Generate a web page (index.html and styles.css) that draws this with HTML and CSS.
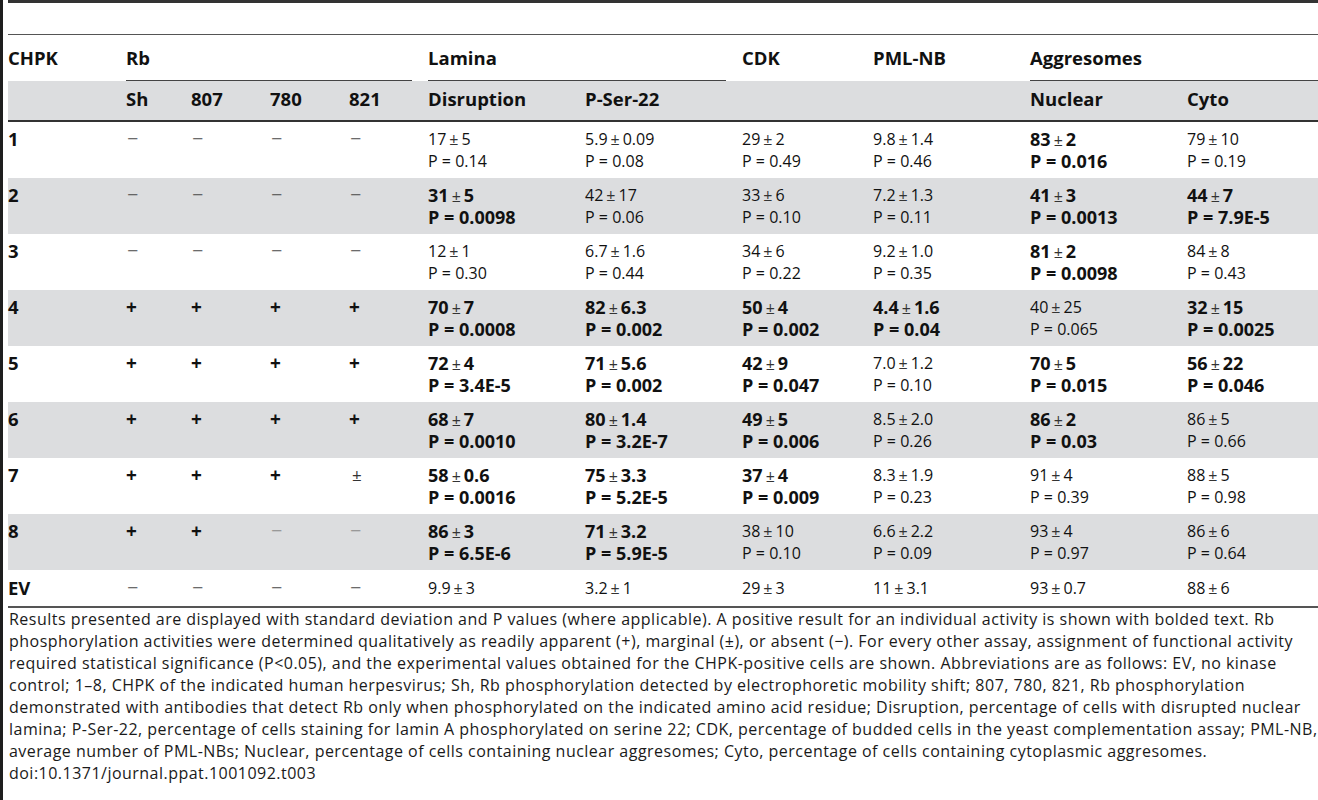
FILE: index.html
```html
<!DOCTYPE html>
<html>
<head>
  <title>Table 3. CHPK activities</title>
  <link rel="stylesheet" href="styles.css">
</head>
<body>
  <div class="frame">
    <div class="caption-space"></div>

    <table class="results">
      <colgroup>
        <col class="c-chpk">
        <col class="c-sh">
        <col class="c-rb">
        <col class="c-rb">
        <col class="c-rb">
        <col class="c-wide">
        <col class="c-wide">
        <col class="c-cdk">
        <col class="c-wide">
        <col class="c-wide">
        <col class="c-cyto">
      </colgroup>
      <thead>
        <tr class="group-row">
          <th>CHPK</th>
          <th colspan="4" class="group"><div class="group-line">Rb</div></th>
          <th colspan="2" class="group"><div class="group-line">Lamina</div></th>
          <th>CDK</th>
          <th>PML-NB</th>
          <th colspan="2" class="group last"><div class="group-line">Aggresomes</div></th>
        </tr>
        <tr class="sub-row">
          <th></th>
          <th>Sh</th>
          <th>807</th>
          <th>780</th>
          <th>821</th>
          <th>Disruption</th>
          <th>P-Ser-22</th>
          <th></th>
          <th></th>
          <th>Nuclear</th>
          <th>Cyto</th>
        </tr>
      </thead>
      <tbody>
        <tr>
          <td class="label">1</td>
          <td class="neg">−</td><td class="neg">−</td><td class="neg">−</td><td class="neg">−</td>
          <td>17<span class="pm">±</span>5<br>P = 0.14</td>
          <td>5.9<span class="pm">±</span>0.09<br>P = 0.08</td>
          <td>29<span class="pm">±</span>2<br>P = 0.49</td>
          <td>9.8<span class="pm">±</span>1.4<br>P = 0.46</td>
          <td class="sig">83<span class="pm">±</span>2<br>P = 0.016</td>
          <td>79<span class="pm">±</span>10<br>P = 0.19</td>
        </tr>
        <tr>
          <td class="label">2</td>
          <td class="neg">−</td><td class="neg">−</td><td class="neg">−</td><td class="neg">−</td>
          <td class="sig">31<span class="pm">±</span>5<br>P = 0.0098</td>
          <td>42<span class="pm">±</span>17<br>P = 0.06</td>
          <td>33<span class="pm">±</span>6<br>P = 0.10</td>
          <td>7.2<span class="pm">±</span>1.3<br>P = 0.11</td>
          <td class="sig">41<span class="pm">±</span>3<br>P = 0.0013</td>
          <td class="sig">44<span class="pm">±</span>7<br>P = 7.9E-5</td>
        </tr>
        <tr>
          <td class="label">3</td>
          <td class="neg">−</td><td class="neg">−</td><td class="neg">−</td><td class="neg">−</td>
          <td>12<span class="pm">±</span>1<br>P = 0.30</td>
          <td>6.7<span class="pm">±</span>1.6<br>P = 0.44</td>
          <td>34<span class="pm">±</span>6<br>P = 0.22</td>
          <td>9.2<span class="pm">±</span>1.0<br>P = 0.35</td>
          <td class="sig">81<span class="pm">±</span>2<br>P = 0.0098</td>
          <td>84<span class="pm">±</span>8<br>P = 0.43</td>
        </tr>
        <tr>
          <td class="label">4</td>
          <td class="pos">+</td><td class="pos">+</td><td class="pos">+</td><td class="pos">+</td>
          <td class="sig">70<span class="pm">±</span>7<br>P = 0.0008</td>
          <td class="sig">82<span class="pm">±</span>6.3<br>P = 0.002</td>
          <td class="sig">50<span class="pm">±</span>4<br>P = 0.002</td>
          <td class="sig">4.4<span class="pm">±</span>1.6<br>P = 0.04</td>
          <td>40<span class="pm">±</span>25<br>P = 0.065</td>
          <td class="sig">32<span class="pm">±</span>15<br>P = 0.0025</td>
        </tr>
        <tr>
          <td class="label">5</td>
          <td class="pos">+</td><td class="pos">+</td><td class="pos">+</td><td class="pos">+</td>
          <td class="sig">72<span class="pm">±</span>4<br>P = 3.4E-5</td>
          <td class="sig">71<span class="pm">±</span>5.6<br>P = 0.002</td>
          <td class="sig">42<span class="pm">±</span>9<br>P = 0.047</td>
          <td>7.0<span class="pm">±</span>1.2<br>P = 0.10</td>
          <td class="sig">70<span class="pm">±</span>5<br>P = 0.015</td>
          <td class="sig">56<span class="pm">±</span>22<br>P = 0.046</td>
        </tr>
        <tr>
          <td class="label">6</td>
          <td class="pos">+</td><td class="pos">+</td><td class="pos">+</td><td class="pos">+</td>
          <td class="sig">68<span class="pm">±</span>7<br>P = 0.0010</td>
          <td class="sig">80<span class="pm">±</span>1.4<br>P = 3.2E-7</td>
          <td class="sig">49<span class="pm">±</span>5<br>P = 0.006</td>
          <td>8.5<span class="pm">±</span>2.0<br>P = 0.26</td>
          <td class="sig">86<span class="pm">±</span>2<br>P = 0.03</td>
          <td>86<span class="pm">±</span>5<br>P = 0.66</td>
        </tr>
        <tr>
          <td class="label">7</td>
          <td class="pos">+</td><td class="pos">+</td><td class="pos">+</td><td class="marg">±</td>
          <td class="sig">58<span class="pm">±</span>0.6<br>P = 0.0016</td>
          <td class="sig">75<span class="pm">±</span>3.3<br>P = 5.2E-5</td>
          <td class="sig">37<span class="pm">±</span>4<br>P = 0.009</td>
          <td>8.3<span class="pm">±</span>1.9<br>P = 0.23</td>
          <td>91<span class="pm">±</span>4<br>P = 0.39</td>
          <td>88<span class="pm">±</span>5<br>P = 0.98</td>
        </tr>
        <tr>
          <td class="label">8</td>
          <td class="pos">+</td><td class="pos">+</td><td class="neg light">−</td><td class="neg light">−</td>
          <td class="sig">86<span class="pm">±</span>3<br>P = 6.5E-6</td>
          <td class="sig">71<span class="pm">±</span>3.2<br>P = 5.9E-5</td>
          <td>38<span class="pm">±</span>10<br>P = 0.10</td>
          <td>6.6<span class="pm">±</span>2.2<br>P = 0.09</td>
          <td>93<span class="pm">±</span>4<br>P = 0.97</td>
          <td>86<span class="pm">±</span>6<br>P = 0.64</td>
        </tr>
        <tr class="last-row">
          <td class="label">EV</td>
          <td class="neg">−</td><td class="neg">−</td><td class="neg">−</td><td class="neg">−</td>
          <td>9.9<span class="pm">±</span>3</td>
          <td>3.2<span class="pm">±</span>1</td>
          <td>29<span class="pm">±</span>3</td>
          <td>11<span class="pm">±</span>3.1</td>
          <td>93<span class="pm">±</span>0.7</td>
          <td>88<span class="pm">±</span>6</td>
        </tr>
      </tbody>
    </table>

    <p class="footnote">
      Results presented are displayed with standard deviation and P values (where applicable). A positive result for an individual activity is shown with bolded text. Rb<br>
      phosphorylation activities were determined qualitatively as readily apparent (+), marginal (±), or absent (−). For every other assay, assignment of functional activity<br>
      required statistical significance (P&lt;0.05), and the experimental values obtained for the CHPK-positive cells are shown. Abbreviations are as follows: EV, no kinase<br>
      control; 1–8, CHPK of the indicated human herpesvirus; Sh, Rb phosphorylation detected by electrophoretic mobility shift; 807, 780, 821, Rb phosphorylation<br>
      demonstrated with antibodies that detect Rb only when phosphorylated on the indicated amino acid residue; Disruption, percentage of cells with disrupted nuclear<br>
      lamina; P-Ser-22, percentage of cells staining for lamin A phosphorylated on serine 22; CDK, percentage of budded cells in the yeast complementation assay; PML-NB,<br>
      average number of PML-NBs; Nuclear, percentage of cells containing nuclear aggresomes; Cyto, percentage of cells containing cytoplasmic aggresomes.<br>
      doi:10.1371/journal.ppat.1001092.t003
    </p>
  </div>
</body>
</html>
```

FILE: styles.css
```css
body {
  margin: 0;
  min-height: 100vh;
  box-sizing: border-box;
  border-left: 3px solid #1e1e1e;
  background-color: #ffffff;
  color: #111111;
  font-family: "Open Sans", "Liberation Sans", sans-serif;
  overflow: hidden;
}

.frame {
  margin-left: 5px;
  border-top: 3px solid #333333;
}

.caption-space {
  height: 31px;
  border-bottom: 1px solid #555555;
}

/* Table */

.results {
  width: 1310px;
  table-layout: fixed;
  border-collapse: separate;
  border-spacing: 0;
  font-size: 16px;
  line-height: 22px;
}

.c-chpk { width: 118px; }
.c-sh { width: 65px; }
.c-rb { width: 79px; }
.c-wide { width: 157px; }
.c-cdk { width: 131px; }
.c-cyto { width: 132px; }

.results th,
.results td {
  text-align: left;
  vertical-align: top;
  padding: 6px 16px 6px 0;
  white-space: nowrap;
}

.results th {
  font-weight: bold;
  font-size: 18.5px;
}

.group-row th {
  padding-top: 12px;
  padding-bottom: 12px;
}

.group-row th.group {
  padding-bottom: 0;
}

.group-row th.last {
  padding-right: 0;
}

.group-line {
  padding-bottom: 11px;
  border-bottom: 1px solid #444444;
}

.sub-row th {
  background-color: #dcdddf;
  padding-top: 7px;
  padding-bottom: 10px;
  border-bottom: 2px solid #333333;
}

.results tbody tr:nth-child(even) td {
  background-color: #dcdddf;
}

.results td.label {
  font-weight: bold;
  font-size: 18.5px;
}

.results td.sig {
  font-weight: bold;
  font-size: 18px;
}

.results td.pos {
  font-weight: bold;
  font-size: 19px;
}

.results td.neg {
  color: #4a4a4a;
  font-size: 20px;
  font-weight: 300;
  padding-left: 1px;
}

.results td.neg.light {
  color: #8a8a8a;
}

.results td.marg {
  color: #333333;
  font-size: 17px;
  padding-left: 3px;
}

.pm {
  margin: 0 3px;
  font-size: 16px;
  line-height: 1;
  font-weight: normal;
  color: #333333;
}

.last-row td {
  padding-top: 7px;
  padding-bottom: 7px;
  border-bottom: 2px solid #555555;
}

/* Footnote */

.footnote {
  margin: 0;
  padding-left: 1px;
  font-size: 16px;
  line-height: 22px;
  letter-spacing: 0.48px;
  white-space: nowrap;
  color: #1a1a1a;
}
```
